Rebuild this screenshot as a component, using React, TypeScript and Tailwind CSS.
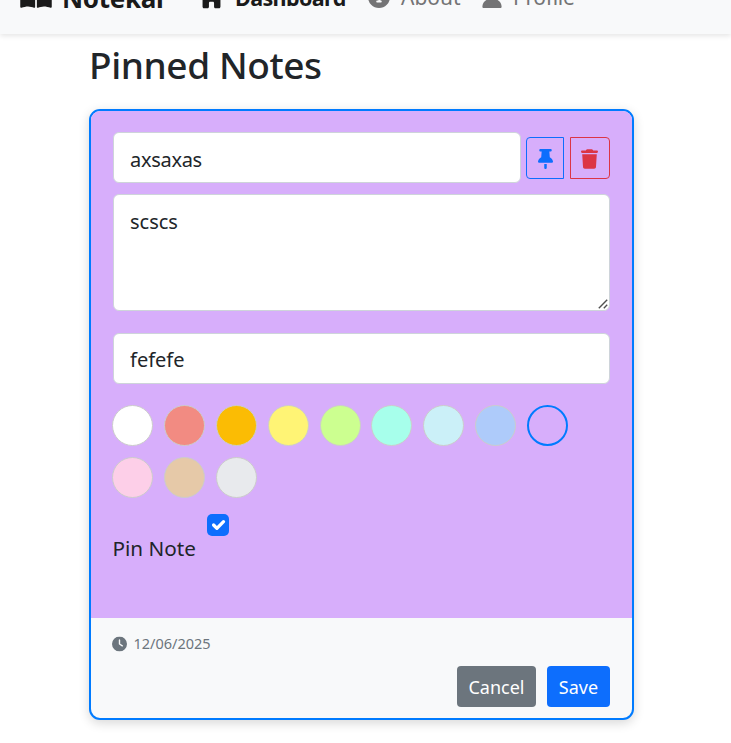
import type { ReactNode } from "react";
import {
  FaBookOpen,
  FaCircleInfo,
  FaClock,
  FaHouse,
  FaThumbtack,
  FaTrash,
  FaUser,
} from "react-icons/fa6";

const swatches = [
  "#ffffff",
  "#f28b82",
  "#fbbc04",
  "#fff475",
  "#ccff90",
  "#a7ffeb",
  "#cbf0f8",
  "#aecbfa",
  "#d7aefb",
  "#fdcfe8",
  "#e6c9a8",
  "#e8eaed",
];

const selected = "#d7aefb";

function NavItem({ icon, label, className }: { icon: ReactNode; label: string; className: string }) {
  return (
    <div className={`flex h-8 items-center ${className}`}>
      {icon}
      {label}
    </div>
  );
}

function Navbar() {
  return (
    <nav className="flex h-[34px] items-start bg-[#f8f9fa] shadow-[0_2px_5px_rgba(0,0,0,0.1)]">
      <div className="-mt-[18px] flex h-8 items-center whitespace-nowrap pl-5">
        <NavItem
          icon={<FaBookOpen className="mr-[10px] h-[28px] w-[32px] -translate-y-[2px]" />}
          label="Notekar"
          className="w-[180px] text-[26px] font-bold tracking-[-0.3px] text-[#1a1a1a]"
        />
        <NavItem
          icon={<FaHouse className="mr-[12px] h-[22px] w-[23px]" />}
          label="Dashboard"
          className="w-[168px] text-[21.5px] font-bold tracking-[-0.6px] text-[#1a1a1a]"
        />
        <NavItem
          icon={<FaCircleInfo className="mr-[11px] size-[22px] -translate-y-[1px]" />}
          label="About"
          className="w-[114px] text-[21px] text-[#747475]"
        />
        <NavItem
          icon={<FaUser className="mr-[11px] h-[22px] w-[20px] -translate-y-[1px]" />}
          label="Profile"
          className="text-[21px] tracking-[-0.3px] text-[#747475]"
        />
      </div>
    </nav>
  );
}

export default function App() {
  return (
    <div className="h-[743px] overflow-hidden bg-white font-['Noto_Sans',sans-serif] text-[20px] text-[#212529]">
      <Navbar />
      <main className="ml-[89px] w-[545px]">
        <h1 className="flex h-[75px] items-start pt-[8px] text-[37px] font-medium leading-[46px] tracking-[-0.4px]">Pinned Notes</h1>
        <section className="flex h-[611px] flex-col overflow-hidden rounded-[11px] border-2 border-[#007bff] bg-[#f8f9fa] shadow-[0_3px_11px_rgba(0,0,0,0.16)]">
          <div className="h-[507px] bg-[#d7aefb] px-[22px] pt-[21px]">
            <div className="flex items-center">
              <input
                defaultValue="axsaxas"
                className="h-[51px] w-[408px] rounded-[6px] border border-[#ced4da] bg-white px-4 pt-[3px] tracking-[-0.3px] outline-none"
              />
              <button className="ml-[5px] flex h-[42px] w-[38px] items-center justify-center rounded-l-[4px] border border-[#0d6efd] pt-[2px] text-[#0d6efd]">
                <FaThumbtack className="h-[20px] w-[15px]" />
              </button>
              <button className="ml-[6px] flex h-[42px] w-[40px] items-center justify-center rounded-r-[4px] border border-[#dc3545] pr-[1px] pt-[2px] text-[#dc3545]">
                <FaTrash className="h-[20px] w-[17px]" />
              </button>
            </div>
            <div className="relative mt-[11px]">
              <textarea
                defaultValue="scscs"
                className="block h-[117px] w-[497px] resize-none rounded-[6px] border border-[#ced4da] bg-white px-4 pt-[11px] leading-[32px] outline-none"
              />
              <svg className="absolute bottom-[2px] right-[2px] size-[10px]" viewBox="0 0 10 10" fill="none" stroke="#505050" strokeWidth="1.4">
                <path d="M0.8 9.2 9.2 0.8M5.8 9.2 9.2 5.8" />
              </svg>
            </div>
            <input
              defaultValue="fefefe"
              className="mt-[22px] block h-[51px] w-[497px] rounded-[6px] border border-[#ced4da] bg-white px-4 pt-[2px] outline-none"
            />
            <div className="-ml-[0.7px] mt-[21px] flex flex-wrap gap-x-[10.8px] gap-y-[11px]">
              {swatches.map((color) => (
                <div
                  key={color}
                  className={`size-[41px] rounded-full ${color === selected ? "border-2 border-[#007bff]" : "border border-[#ccc]"}`}
                  style={{ backgroundColor: color }}
                />
              ))}
            </div>
            <div className="mt-[16px] flex">
              <span className="-ml-[0.5px] w-[94.5px] pt-[18px] text-[20.7px] leading-[32px]">Pin Note</span>
              <span className="flex size-[22px] items-center justify-center rounded-[5px] bg-[#0d6efd]">
                <svg className="size-[22px]" viewBox="0 0 20 20" fill="none" stroke="#fff" strokeWidth="3" strokeLinecap="round" strokeLinejoin="round">
                  <path d="m6 10 3 3 6-6" />
                </svg>
              </span>
            </div>
          </div>
          <footer className="px-[22px] pt-[14px]">
            <div className="flex h-[24px] items-center text-[14.5px] text-[#6c757d]">
              <FaClock className="-ml-[1px] mr-[6.5px] size-[15px] -translate-y-[0.5px]" />
              12/06/2025
            </div>
            <div className="mt-[10px] flex justify-end gap-[11px] text-[18px] text-white">
              <button className="h-[41px] w-[79px] rounded-[4px] bg-[#6c757d] pt-[2px]">Cancel</button>
              <button className="h-[41px] w-[63px] rounded-[4px] bg-[#0d6efd] pt-[2px]">Save</button>
            </div>
          </footer>
        </section>
      </main>
    </div>
  );
}
